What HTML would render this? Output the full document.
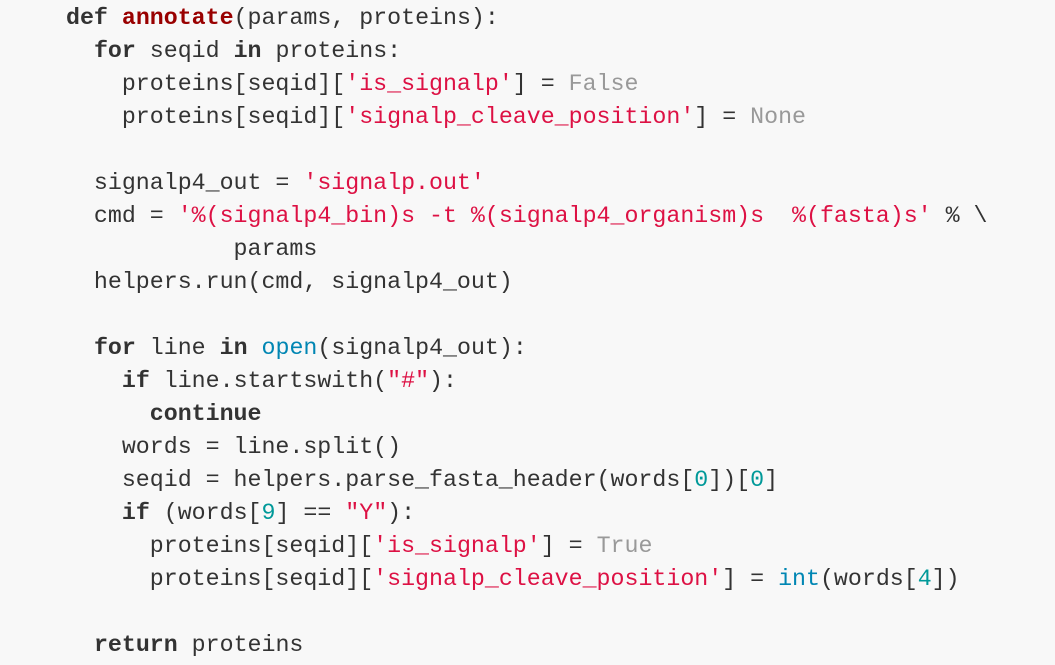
<!DOCTYPE html>
<html><head><meta charset="utf-8"><style>
html,body{margin:0;padding:0;background:#f8f8f8;width:1055px;height:665px;overflow:hidden}
pre{margin:0;position:absolute;left:66px;top:2px;font-family:"Liberation Mono",monospace;font-size:23.28px;line-height:33px;color:#333;white-space:pre}
.k{font-weight:bold;color:#333}.f{font-weight:bold;color:#990000}.s{color:#dd1144}.c{color:#999}.b{color:#0086b3}.n{color:#009999}
</style></head><body>
<pre><span class="k">def</span> <span class="f">annotate</span>(params, proteins):
  <span class="k">for</span> seqid <span class="k">in</span> proteins:
    proteins[seqid][<span class="s">'is_signalp'</span>] = <span class="c">False</span>
    proteins[seqid][<span class="s">'signalp_cleave_position'</span>] = <span class="c">None</span>

  signalp4_out = <span class="s">'signalp.out'</span>
  cmd = <span class="s">'%(signalp4_bin)s -t %(signalp4_organism)s  %(fasta)s'</span> % \
            params
  helpers.run(cmd, signalp4_out)

  <span class="k">for</span> line <span class="k">in</span> <span class="b">open</span>(signalp4_out):
    <span class="k">if</span> line.startswith(<span class="s">"#"</span>):
      <span class="k">continue</span>
    words = line.split()
    seqid = helpers.parse_fasta_header(words[<span class="n">0</span>])[<span class="n">0</span>]
    <span class="k">if</span> (words[<span class="n">9</span>] == <span class="s">"Y"</span>):
      proteins[seqid][<span class="s">'is_signalp'</span>] = <span class="c">True</span>
      proteins[seqid][<span class="s">'signalp_cleave_position'</span>] = <span class="b">int</span>(words[<span class="n">4</span>])

  <span class="k">return</span> proteins</pre>
</body></html>
